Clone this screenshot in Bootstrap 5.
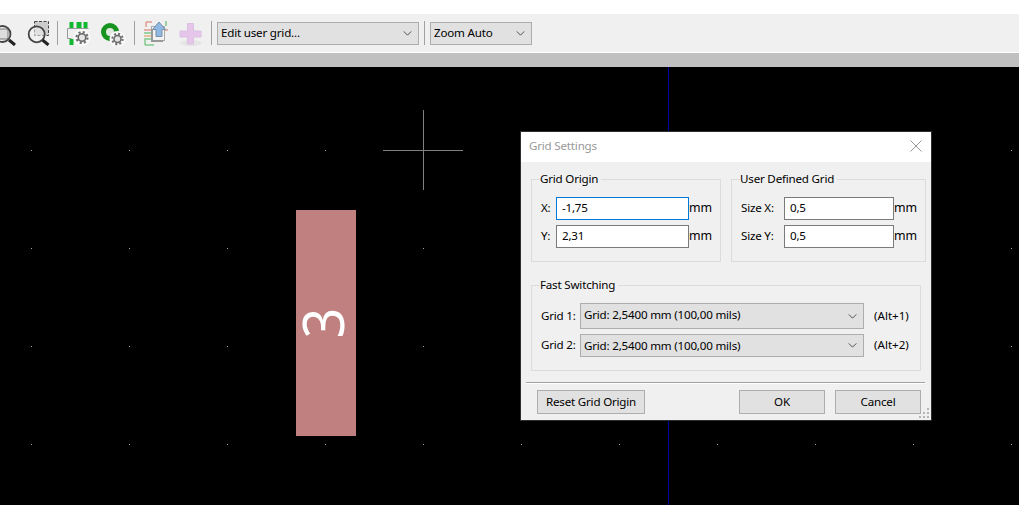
<!doctype html>
<html lang="en"><head><meta charset="utf-8"><title>Grid Settings</title>
<link href="https://cdn.jsdelivr.net/npm/bootstrap@5.3.0/dist/css/bootstrap.min.css" rel="stylesheet">
<style>
html,body{height:100%;overflow:hidden}
body{font:11.6px/16px "Noto Sans",sans-serif;letter-spacing:-.2px;color:#000;background:#fff;display:flex;flex-direction:column}
.topgap{height:14px;flex:none}
.tbar{height:38px;flex:none;background:#f0f0f0;border:0}
.tbar svg{display:block;flex:none}
.tsep{width:1px;height:24px;background:#a0a0a0;flex:none}
.wline{height:1px;background:#fff;flex:none}
.gbar{height:14px;background:#c0c0c0;flex:none}
.canvasarea{flex:1;background:#000;position:relative;overflow:hidden}
.canvasarea>svg.dots{position:absolute;inset:0;width:100%;height:100%}
.axisv{position:absolute;left:668px;top:0;bottom:0;width:1px;background:#0000a8}
.crossh{position:absolute;left:383px;top:83px;width:80px;height:1px;background:#808080}
.crossv{position:absolute;left:423px;top:43px;width:1px;height:80px;background:#808080}
.padrect{position:absolute;left:296px;top:143px;width:60px;height:226px;background:#c18080;display:flex;align-items:center;justify-content:center;padding-right:7px}
.padnum{display:block;transform:rotate(-90deg) scaleX(.96);color:#fff;font:400 56px/56px "Noto Sans",sans-serif;letter-spacing:0}
.griddlg{position:absolute;left:520px;top:64px;width:412px;height:290px;background:#f0f0f0;border:1px solid #2e2e2e;display:flex;flex-direction:column}
.dlgtitle{height:30px;background:#fff;flex:none;color:#999;padding:0 8px 2px;display:flex;align-items:center;justify-content:space-between}
.dlgbody{padding:9px 5px 0 10px;flex:1;display:flex;flex-direction:column;position:relative}
.grp{border:1px solid #dcdcdc;min-width:0;padding:0 9px 13px;margin:0}
.grp legend{float:none;width:auto;font-size:11.6px;line-height:16px;margin:0 0 0 -1px;padding:0 3px 0 0;background:transparent}
.grpa{width:190px}.grpb{width:195px}.grpc{width:390px;margin-top:15px}
.frow{display:flex;align-items:center;margin-top:5px}
.frow.first{margin-top:10px}
.flab{flex:none;white-space:nowrap}
.la{width:15px}.lb{width:43px}.lc{width:39px}
.upline{padding-bottom:2px}
.unit{font-size:12.4px}
.form-control.fld{flex:none;height:23px;min-height:0;border:1px solid #7a7a7a;border-radius:0;padding:0 5px 2px;font-size:11.6px;line-height:16px;color:#000;box-shadow:none;letter-spacing:-.2px}
.fld.wa{width:133px}.fld.wb{width:110px}
.form-control.fld.act{border-color:#0078d7}
.form-select.pick{border:1px solid #adadad;border-radius:0;background-color:#e1e1e1;padding:0 20px 0 3px;font-size:11.6px;line-height:16px;color:#000;height:23px;box-shadow:none;letter-spacing:-.2px;
 background-image:url("data:image/svg+xml,%3csvg xmlns='http://www.w3.org/2000/svg' viewBox='0 0 10 6'%3e%3cpath fill='none' stroke='%23333' d='M.5.5 5 5 9.500.5'/%3e%3c/svg%3e");background-size:9px 5px;background-position:right 6px center}
.pick.wc{width:284px;flex:none}
.pick.tall{height:26px;padding-bottom:2px}
.keyhint{margin-left:10px;white-space:nowrap;letter-spacing:0}
.dlgline{position:absolute;left:5px;right:6px;top:220px;height:2px;background:#a0a0a0;border-bottom:1px solid #fff}
.dlgfoot{position:absolute;left:16px;right:10px;top:228px;display:flex}
.btn.wbtn{height:24px;border:1px solid #adadad;background:#e1e1e1;border-radius:0;color:#000;font-size:11.6px;line-height:16px;letter-spacing:-.2px;padding:0;--bs-btn-hover-bg:#e1e1e1}
.w108{width:108px}.w86{width:86px}.ml10{margin-left:10px}
.grip{position:absolute;right:1px;bottom:1px}
.tpick{flex:none;height:23px!important}
</style></head><body>
<div class="topgap"></div>
<div class="tbar d-flex align-items-center">
 <svg width="16" height="26" viewBox="0 0 16 26"><rect x="-4" y="9" width="12" height="10" rx="1" fill="#ddd" stroke="#777"/><circle cx="2.500" cy="14" r="8" fill="none" stroke="#444" stroke-width="1.800"/><path d="M9 20l6 5" stroke="#222" stroke-width="3"/></svg>
 <svg style="margin-left:9px" width="25" height="26" viewBox="0 0 25 26"><rect x="9.500" y="1.500" width="14" height="14" fill="#ccc" stroke="#444" stroke-dasharray="3 1.500"/><circle cx="11.700" cy="14.300" r="8" fill="#f0f0f0" fill-opacity=".55" stroke="#444" stroke-width="1.800"/><path d="M17.500 20l6 5" stroke="#222" stroke-width="3"/></svg>
 <div class="tsep" style="margin-left:7px"></div>
 <svg style="margin-left:7px" width="26" height="26" viewBox="0 0 26 26"><path d="M2.500 8.500h21M2.500 8.500v10M2.500 18.500h4" fill="none" stroke="#999"/><g fill="#0fb82f"><rect x="4.500" y="2" width="4" height="6"/><rect x="11.500" y="2" width="5" height="6"/><rect x="18.500" y="2" width="4" height="6"/><rect x="4.500" y="19" width="4" height="6"/></g><circle cx="17" cy="17.500" r="8.500" fill="#fafafa"/><circle cx="17" cy="17.500" r="3.800" fill="#e4e4e4" stroke="#666" stroke-width="1.600"/><circle cx="17" cy="17.500" r="5.500" fill="none" stroke="#707070" stroke-width="2.200" stroke-dasharray="2.160 2.160"/></svg>
 <svg style="margin-left:9px" width="26" height="26" viewBox="0 0 26 26"><circle cx="10" cy="12" r="6.500" fill="#dfe9df" stroke="#17931f" stroke-width="5"/><circle cx="17.500" cy="19" r="8" fill="#fafafa"/><circle cx="17.500" cy="19" r="3.500" fill="#e4e4e4" stroke="#666" stroke-width="1.500"/><circle cx="17.500" cy="19" r="5.200" fill="none" stroke="#707070" stroke-width="2" stroke-dasharray="2.040 2.040"/></svg>
 <div class="tsep" style="margin-left:8px"></div>
 <svg style="margin-left:8px" width="26" height="26" viewBox="0 0 26 26"><g fill="none" stroke-width="1.500"><path d="M3 2h6M3 2v5M1 10h9" stroke="#e09a90"/><path d="M1 13h9" stroke="#7fc98a"/><path d="M1 16h9" stroke="#e5b080"/><path d="M2 25v-6h8M2 25h9" stroke="#7fc98a"/><path d="M20 10h5" stroke="#e09a90"/><path d="M23 1v5" stroke="#7fc98a"/></g><rect x="8.500" y="6.500" width="13" height="14" fill="#f2f2f2" stroke="#aaa"/><path d="M9 9v12h11" fill="none" stroke="#999" stroke-width="2"/><path d="M16 2l6.500 7.500h-3.500v7h-6v-7h-3.500z" fill="#8fb9e2" stroke="#7a8fa8"/></svg>
 <svg style="margin-left:9px" width="26" height="26" viewBox="0 0 26 26"><ellipse cx="13" cy="23" rx="11" ry="3" fill="#e5e5e5"/><path d="M9.500 3.500h6v7.500h7.500v6h-7.500v7h-6v-7h-7.500v-6h7.500z" fill="#e5c6ea" stroke="#dcc0e2"/></svg>
 <div class="tsep" style="margin-left:7px"></div>
 <select class="form-select pick tpick" style="margin-left:5px;width:202px"><option>Edit user grid...</option></select>
 <div class="tsep" style="margin-left:5px"></div>
 <select class="form-select pick tpick" style="margin-left:5px;width:102px"><option>Zoom Auto</option></select>
</div>
<div class="wline"></div>
<div class="gbar"></div>
<main class="canvasarea">
 <svg class="dots"><defs><pattern id="gp" x="31" y="83" width="98" height="98" patternUnits="userSpaceOnUse"><rect width="1" height="1" fill="#a0a0a0"/></pattern></defs><rect width="100%" height="100%" fill="url(#gp)"/></svg>
 <div class="axisv"></div>
 <div class="crossh"></div><div class="crossv"></div>
 <div class="padrect"><span class="padnum">3</span></div>
 <div class="griddlg" role="dialog">
  <div class="dlgtitle"><span>Grid Settings</span><svg width="14" height="14" viewBox="0 0 14 14"><path d="M1.500 1.500l11 11M12.500 1.500l-11 11" stroke="#999" fill="none"/></svg></div>
  <div class="dlgbody">
   <div class="d-flex" style="gap:10px">
    <fieldset class="grp grpa"><legend>Grid Origin</legend>
     <div class="frow first"><span class="flab la upline">X:</span><input class="form-control fld wa act" value="-1,75"><span class="unit upline">mm</span></div>
     <div class="frow"><span class="flab la upline">Y:</span><input class="form-control fld wa" value="2,31"><span class="unit upline">mm</span></div>
    </fieldset>
    <fieldset class="grp grpb"><legend>User Defined Grid</legend>
     <div class="frow first"><span class="flab lb upline">Size X:</span><input class="form-control fld wb" value="0,5"><span class="unit upline">mm</span></div>
     <div class="frow"><span class="flab lb upline">Size Y:</span><input class="form-control fld wb" value="0,5"><span class="unit upline">mm</span></div>
    </fieldset>
   </div>
   <fieldset class="grp grpc"><legend>Fast Switching</legend>
    <div class="frow first"><span class="flab lc">Grid 1:</span><select class="form-select pick wc tall"><option>Grid: 2,5400 mm (100,00 mils)</option></select><span class="keyhint">(Alt+1)</span></div>
    <div class="frow"><span class="flab lc upline">Grid 2:</span><select class="form-select pick wc"><option>Grid: 2,5400 mm (100,00 mils)</option></select><span class="keyhint upline">(Alt+2)</span></div>
   </fieldset>
   <div class="dlgline"></div>
   <div class="dlgfoot"><button class="btn wbtn w108">Reset Grid Origin</button><button class="btn wbtn w86 ms-auto">OK</button><button class="btn wbtn w86 ml10">Cancel</button></div>
  </div>
  <svg class="grip" width="12" height="12" viewBox="0 0 12 12" fill="#b5b5b5"><rect x="9" y="1" width="2" height="2"/><rect x="5" y="5" width="2" height="2"/><rect x="9" y="5" width="2" height="2"/><rect x="1" y="9" width="2" height="2"/><rect x="5" y="9" width="2" height="2"/><rect x="9" y="9" width="2" height="2"/></svg>
 </div>
</main>
<script src="https://cdn.jsdelivr.net/npm/bootstrap@5.3.0/dist/js/bootstrap.bundle.min.js"></script>
</body></html>
